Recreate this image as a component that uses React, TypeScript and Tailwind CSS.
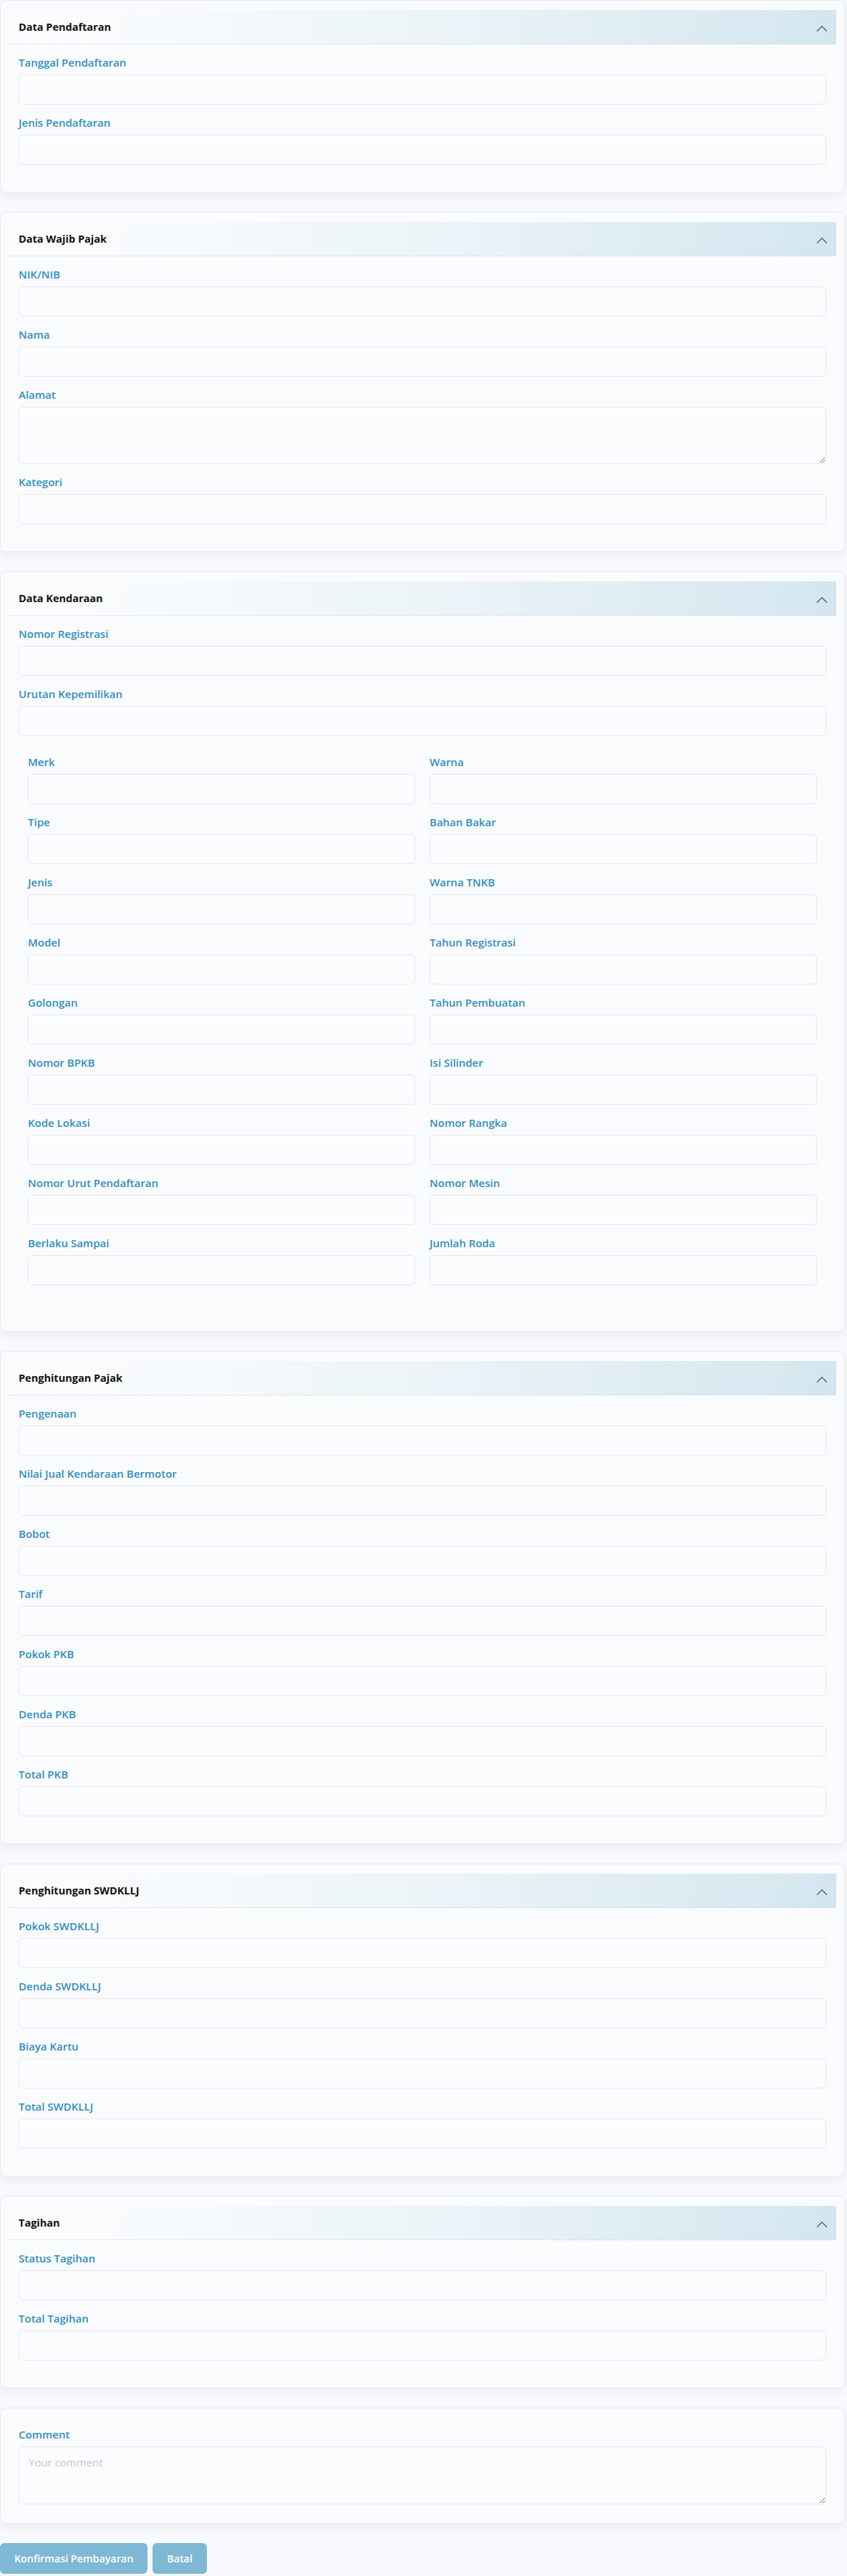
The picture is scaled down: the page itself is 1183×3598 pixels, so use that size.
import { ChevronUp } from "lucide-react";

type Section = {
  title: string;
  fields: { label: string; textarea?: boolean }[];
  grid?: [string, string][];
};

const SECTIONS: Section[] = [
  {
    title: "Data Pendaftaran",
    fields: [{ label: "Tanggal Pendaftaran" }, { label: "Jenis Pendaftaran" }],
  },
  {
    title: "Data Wajib Pajak",
    fields: [{ label: "NIK/NIB" }, { label: "Nama" }, { label: "Alamat", textarea: true }, { label: "Kategori" }],
  },
  {
    title: "Data Kendaraan",
    fields: [{ label: "Nomor Registrasi" }, { label: "Urutan Kepemilikan" }],
    grid: [
      ["Merk", "Warna"],
      ["Tipe", "Bahan Bakar"],
      ["Jenis", "Warna TNKB"],
      ["Model", "Tahun Registrasi"],
      ["Golongan", "Tahun Pembuatan"],
      ["Nomor BPKB", "Isi Silinder"],
      ["Kode Lokasi", "Nomor Rangka"],
      ["Nomor Urut Pendaftaran", "Nomor Mesin"],
      ["Berlaku Sampai", "Jumlah Roda"],
    ],
  },
  {
    title: "Penghitungan Pajak",
    fields: [
      { label: "Pengenaan" },
      { label: "Nilai Jual Kendaraan Bermotor" },
      { label: "Bobot" },
      { label: "Tarif" },
      { label: "Pokok PKB" },
      { label: "Denda PKB" },
      { label: "Total PKB" },
    ],
  },
  {
    title: "Penghitungan SWDKLLJ",
    fields: [{ label: "Pokok SWDKLLJ" }, { label: "Denda SWDKLLJ" }, { label: "Biaya Kartu" }, { label: "Total SWDKLLJ" }],
  },
  {
    title: "Tagihan",
    fields: [{ label: "Status Tagihan" }, { label: "Total Tagihan" }],
  },
];

function Field({ label, textarea }: { label: string; textarea?: boolean }) {
  return (
    <div className="flex flex-col">
      <label className="mb-[7px] h-5 text-[15px] font-semibold leading-5 text-[#2f8ebd]">{label}</label>
      {textarea ? (
        <textarea className="h-[80px] w-full rounded-md border border-[#e5e8ec] bg-[#fbfcfe] px-3 py-2 outline-none" />
      ) : (
        <input className="h-[42px] w-full rounded-md border border-[#e5e8ec] bg-[#fbfcfe] px-3 outline-none" />
      )}
    </div>
  );
}

function Card({ section }: { section: Section }) {
  return (
    <div className="rounded-lg border border-[#e6e9ee] bg-[#fafbfd] px-[11px] pt-[13px] pb-[38px] shadow-[0_6px_14px_rgba(40,60,100,0.05)]">
      <div className="flex h-[48px] items-center justify-between border-b border-dotted border-[#d3d8de] bg-linear-[100deg] from-[#fafcfd] from-10% via-[#eaf3f7] via-55% to-[#d3e6ef] pl-[14px] pr-[7px]">
        <h2 className="text-[14.5px] font-bold text-[#111]">{section.title}</h2>
        <ChevronUp size={26} strokeWidth={1.1} className="translate-y-[2px] text-[#555]" />
      </div>
      <div className="flex flex-col gap-[15px] px-[14px] pt-[15px]">
        {section.fields.map((f) => (
          <Field key={f.label} label={f.label} textarea={f.textarea} />
        ))}
        {section.grid && (
          <div className="grid grid-cols-2 gap-x-5 gap-y-[15px] px-[13px] pt-[11px] pb-[26px]">
            {section.grid.flat().map((l) => (
              <Field key={l} label={l} />
            ))}
          </div>
        )}
      </div>
    </div>
  );
}

export default function App() {
  return (
    <div className="min-h-screen bg-[#f8f9fc] pr-[3px] font-['Open_Sans',sans-serif]">
      <div className="flex flex-col gap-[27px]">
        {SECTIONS.map((s) => (
          <Card key={s.title} section={s} />
        ))}
        <div className="rounded-lg border border-[#e6e9ee] bg-[#fafbfd] px-[25px] pt-[26px] pb-[26px] shadow-[0_6px_14px_rgba(40,60,100,0.05)]">
          <div className="flex flex-col">
            <label className="mb-[7px] h-5 text-[15px] font-semibold leading-5 text-[#2f8ebd]">Comment</label>
            <textarea
              placeholder="Your comment"
              className="h-[81px] w-full rounded-md border border-[#e5e8ec] bg-[#fbfcfe] px-[13px] py-[10px] text-[15px] outline-none placeholder:text-[#c4c7cc]"
            />
          </div>
        </div>
      </div>
      <div className="mt-[27px] flex gap-[7px]">
        <button className="h-[43px] rounded-md bg-[#7fb8d4] px-5 text-[14.3px] font-semibold text-white">
          Konfirmasi Pembayaran
        </button>
        <button className="h-[43px] rounded-md bg-[#7fb8d4] px-5 text-[14.3px] font-semibold text-white">Batal</button>
      </div>
    </div>
  );
}
